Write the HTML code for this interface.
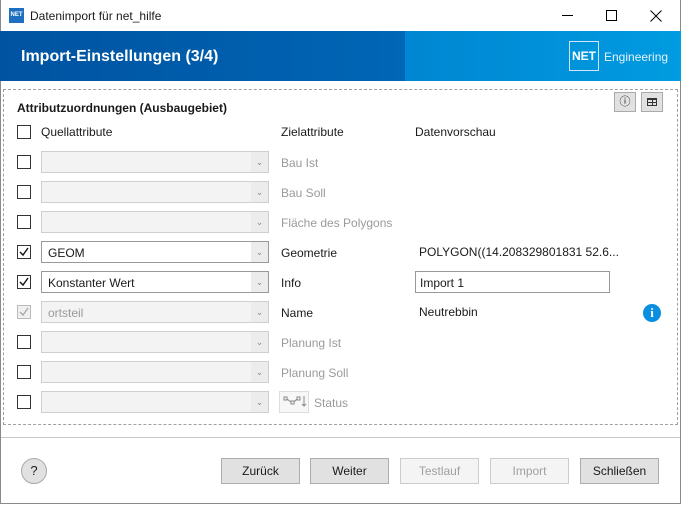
<!DOCTYPE html>
<html><head><meta charset="utf-8"><style>
*{box-sizing:border-box;margin:0;padding:0}
body{width:681px;height:505px;background:#fff;font-family:"Liberation Sans",sans-serif;font-size:12px;color:#1a1a1a;position:relative;overflow:hidden}
.win{position:absolute;left:0;top:0;width:681px;height:504px;border:1px solid #8a8a8a;border-top:none}
.abs{position:absolute}
.cb{position:absolute;left:17px;width:14px;height:14px;border:1px solid #333;background:#fff}
.cb.dis{border-color:#bbb}
.cb svg{position:absolute;left:1px;top:1px}
.combo{position:absolute;left:41px;width:228px;height:22px;border:1px solid #cfcfcf;background:#f3f3f3}
.combo.en{border-color:#999;background:#fff}
.combo .arr{position:absolute;right:0;top:0;width:17px;height:20px;background:#ececec;color:#888;font-size:9px;text-align:center;line-height:20px}
.combo .t{position:absolute;left:6px;top:4px}
.lbl{position:absolute;left:281px}
.dim{color:#9a9a9a}
.btn{position:absolute;top:458px;width:79px;height:26px;border:1px solid #adadad;background:#e1e1e1;text-align:center;line-height:24px;font-size:12px}
.btn.d{border-color:#ccc;background:#f4f4f4;color:#a0a0a0}
</style></head><body>
<div class="win"></div>
<div class="abs" style="left:9px;top:8px;width:15px;height:15px;background:#1f6fc0;color:#fff;font-size:6px;font-weight:bold;line-height:15px;text-align:center">NET</div>
<div class="abs" style="left:30px;top:9px;font-size:12px">Datenimport für net_hilfe</div>
<div class="abs" style="left:562px;top:15px;width:11px;height:1px;background:#000"></div>
<div class="abs" style="left:606px;top:10px;width:11px;height:11px;border:1px solid #000"></div>
<svg class="abs" style="left:650px;top:10px" width="12" height="12"><path d="M0.5 0.5L11.5 11.5M11.5 0.5L0.5 11.5" stroke="#000" stroke-width="1"/></svg>
<div class="abs" style="left:0;top:31px;width:681px;height:50px;background:linear-gradient(90deg,#0053a0 0%,#0066b6 60%,#0070c0 100%)"></div>
<div class="abs" style="left:405px;top:31px;width:276px;height:50px;background:linear-gradient(90deg,#0086d2,#009be0)"></div>
<div class="abs" style="left:21px;top:48px;color:#fff;font-size:16px;font-weight:bold">Import-Einstellungen (3/4)</div>
<div class="abs" style="left:569px;top:41px;width:30px;height:30px;border:1px solid #cfe6f7;color:#fff;font-weight:bold;font-size:12px;text-align:center;line-height:28px">NET</div>
<div class="abs" style="left:604px;top:50px;color:#e6f3fc;font-size:12px">Engineering</div>
<div class="abs" style="left:3px;top:89px;width:675px;height:336px;border:1px dashed #a0a0a0"></div>
<div class="abs" style="left:614px;top:92px;width:22px;height:20px;border:1px solid #aaa;background:#e1e1e1;text-align:center;line-height:18px;font-size:11px">ⓘ</div>
<div class="abs" style="left:641px;top:92px;width:22px;height:20px;border:1px solid #aaa;background:#e1e1e1"><div style="position:absolute;left:5px;top:5px;width:10px;height:8px;border:1px solid #333;border-top-width:2px;background:linear-gradient(90deg,transparent 4px,#333 4px,#333 5px,transparent 5px),linear-gradient(0deg,transparent 2px,#333 2px,#333 3px,transparent 3px)"></div></div>
<div class="abs" style="left:17px;top:101px;font-weight:bold">Attributzuordnungen (Ausbaugebiet)</div>
<div class="cb" style="top:125px"></div>
<div class="abs" style="left:41px;top:125px">Quellattribute</div>
<div class="lbl" style="top:125px">Zielattribute</div>
<div class="abs" style="left:415px;top:125px">Datenvorschau</div>

<div class="cb" style="top:155px"></div><div class="combo" style="top:151px"><div class="arr">⌄</div></div><div class="lbl dim" style="top:156px">Bau Ist</div>
<div class="cb" style="top:185px"></div><div class="combo" style="top:181px"><div class="arr">⌄</div></div><div class="lbl dim" style="top:186px">Bau Soll</div>
<div class="cb" style="top:215px"></div><div class="combo" style="top:211px"><div class="arr">⌄</div></div><div class="lbl dim" style="top:216px">Fläche des Polygons</div>
<div class="cb" style="top:245px"><svg width="10" height="10"><path d="M1 5L4 8L9 1" stroke="#111" stroke-width="1.4" fill="none"/></svg></div><div class="combo en" style="top:241px"><span class="t">GEOM</span><div class="arr">⌄</div></div><div class="lbl" style="top:246px">Geometrie</div>
<div class="abs" style="left:419px;top:245px">POLYGON((14.208329801831 52.6...</div>
<div class="cb" style="top:275px"><svg width="10" height="10"><path d="M1 5L4 8L9 1" stroke="#111" stroke-width="1.4" fill="none"/></svg></div><div class="combo en" style="top:271px"><span class="t">Konstanter Wert</span><div class="arr">⌄</div></div><div class="lbl" style="top:276px">Info</div>
<div class="abs" style="left:415px;top:271px;width:195px;height:22px;border:1px solid #999"><span style="position:absolute;left:4px;top:4px">Import 1</span></div>
<div class="cb dis" style="top:305px;background:#f0f0f0"><svg width="10" height="10"><path d="M1 5L4 8L9 1" stroke="#aaa" stroke-width="1.4" fill="none"/></svg></div><div class="combo" style="top:301px"><span class="t dim">ortsteil</span><div class="arr">⌄</div></div><div class="lbl" style="top:306px">Name</div>
<div class="abs" style="left:419px;top:305px">Neutrebbin</div>
<div class="abs" style="left:643px;top:304px;width:18px;height:18px;border-radius:50%;background:#0a8ee0;color:#fff;font-weight:bold;font-size:13px;text-align:center;line-height:18px;font-family:'Liberation Serif',serif">i</div>
<div class="cb" style="top:335px"></div><div class="combo" style="top:331px"><div class="arr">⌄</div></div><div class="lbl dim" style="top:336px">Planung Ist</div>
<div class="cb" style="top:365px"></div><div class="combo" style="top:361px"><div class="arr">⌄</div></div><div class="lbl dim" style="top:366px">Planung Soll</div>
<div class="cb" style="top:395px"></div><div class="combo" style="top:391px"><div class="arr">⌄</div></div>
<div class="abs" style="left:279px;top:391px;width:30px;height:22px;border:1px solid #ddd;background:#f7f7f7"><svg width="28" height="20"><g stroke="#888" fill="none"><rect x="4" y="5" width="3" height="3"/><rect x="11" y="9" width="3" height="3"/><rect x="17" y="5" width="3" height="3"/><path d="M7 7L11 10M14 10L17 7M24 4V14M22 12L24 14L26 12"/></g></svg></div>
<div class="abs dim" style="left:314px;top:396px">Status</div>

<div class="abs" style="left:1px;top:437px;width:679px;height:1px;background:#c8c8c8"></div>
<div class="abs" style="left:21px;top:458px;width:26px;height:26px;border-radius:50%;border:1px solid #aaa;background:#e1e1e1;text-align:center;line-height:24px;font-size:13px">?</div>
<div class="btn" style="left:221px">Zurück</div>
<div class="btn" style="left:310px">Weiter</div>
<div class="btn d" style="left:400px">Testlauf</div>
<div class="btn d" style="left:490px">Import</div>
<div class="btn" style="left:580px">Schließen</div>
</body></html>
